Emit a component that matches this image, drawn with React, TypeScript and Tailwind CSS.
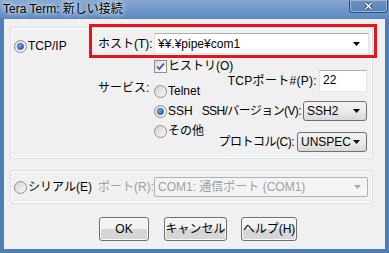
import React from "react";

const font = "font-['Liberation_Sans','Noto_Sans_CJK_JP',sans-serif]";

function Arrow({ gray }: { gray?: boolean }) {
  return (
    <svg width="7" height="4" viewBox="0 0 7 4" className="shrink-0">
      <path d="M0 0h7L3.5 4z" fill={gray ? "#a8a8a8" : "#000"} />
    </svg>
  );
}

function Radio({ on }: { on?: boolean }) {
  return (
    <span className="flex h-[13px] w-[13px] shrink-0 items-center justify-center rounded-full border border-[#8f8f8f] bg-gradient-to-br from-[#d6d6d6] to-[#fdfdfd]">
      {on ? (
        <span className="h-[7px] w-[7px] rounded-full border border-[#1c4f8c] bg-gradient-to-br from-[#8ec3f0] to-[#1a5aa8]" />
      ) : (
        <span className="h-[9px] w-[9px] rounded-full bg-gradient-to-br from-[#d4d4d4] to-[#f6f6f6]" />
      )}
    </span>
  );
}

function Check() {
  return (
    <span className="flex h-[13px] w-[13px] shrink-0 items-center justify-center border border-[#8f8f8f] bg-gradient-to-br from-[#dcdcdc] to-[#fdfdfd]">
      <svg width="9" height="9" viewBox="0 0 9 9">
        <path d="M1 4.5l2.3 2.5L8 1.5" fill="none" stroke="#3b4fa0" strokeWidth="1.8" />
      </svg>
    </span>
  );
}

function Select({ w, text }: { w: string; text: string }) {
  return (
    <div
      className={`${w} flex h-[20px] items-center justify-between rounded-[3px] border border-[#707070] bg-gradient-to-b from-[#f2f2f2] via-[#ebebeb] to-[#d8d8d8] pl-[3px] pr-[6px]`}
    >
      <span>{text}</span>
      <Arrow />
    </div>
  );
}

function Btn({ w, children }: { w: string; children: React.ReactNode }) {
  return (
    <button
      className={`${w} flex h-[24px] items-center justify-center rounded-[3px] border border-[#707070] bg-gradient-to-b from-[#f3f3f3] from-50% to-[#d6d6d6] to-50% shadow-[inset_0_0_0_1px_#fbfbfb]`}
    >
      {children}
    </button>
  );
}

export default function App() {
  return (
    <div
      className={`${font} flex h-[253px] w-[389px] flex-col overflow-hidden whitespace-nowrap bg-[#4f7db5] text-[12px] leading-[14px] text-black`}
    >
      {/* title bar */}
      <div className="flex h-[19px] bg-gradient-to-b from-[#86a8d2] to-[#5c88bf]">
        <span className="pl-[3px] pt-[2px] [text-shadow:0_0_6px_#fff,0_0_4px_#e8eef6]">
          Tera Term: 新しい接続
        </span>
        <div className="ml-auto mr-[1px] flex h-[13px] w-[39px] items-center justify-center rounded-b-[4px] border border-t-0 border-[#2f4f7a] bg-gradient-to-b from-[#6e93c2] to-[#5a83b8] shadow-[inset_0_0_0_1px_#9ab6d8]">
          <svg width="9" height="8" viewBox="0 0 9 8">
            <path d="M1.5 1l6 6M7.5 1l-6 6" stroke="#24364f" strokeWidth="3" />
            <path d="M1.5 1l6 6M7.5 1l-6 6" stroke="#fff" strokeWidth="1.6" />
          </svg>
        </div>
      </div>

      <div className="flex flex-1 px-[4px] pb-[4px]">
        <div className="relative flex flex-1 flex-col bg-[#f0f0f0] pl-[6px] pt-[8px]">
          {/* TCP/IP group */}
          <div className="flex h-[132px] w-[363px] rounded-[3px] border border-[#d5dfe5] shadow-[inset_0_0_0_1px_#fff]">
            <div className="w-[87px] pl-[3px] pt-[10px]">
              <div className="flex h-[16px] items-center gap-[1px]">
                <Radio on />
                <span>TCP/IP</span>
              </div>
            </div>
            <div className="flex flex-col pt-[5px]">
              <div className="flex h-[21px] items-center">
                <span className="w-[56px]">ホスト(T):</span>
                <div className="flex h-[21px] w-[215px] items-center justify-between border border-[#abadb3] border-x-[#e2e3ea] border-b-[#e3e9ef] bg-white pl-[3px] pr-[8px]">
                  <span>¥¥.¥pipe¥com1</span>
                  <Arrow />
                </div>
              </div>
              <div className="mt-[6px] flex h-[12px] items-center gap-[1px] pl-[56px]">
                <Check />
                <span>ヒストリ(O)</span>
              </div>
              <div className="flex">
                <div className="w-[56px] pt-[8px]">
                  <div className="flex h-[16px] items-center">サービス:</div>
                </div>
                <div className="flex w-[46px] flex-col pt-[9px]">
                  <div className="flex h-[20px] items-center gap-[1px]">
                    <Radio />
                    <span>Telnet</span>
                  </div>
                  <div className="flex h-[20px] items-center gap-[1px]">
                    <Radio on />
                    <span>SSH</span>
                  </div>
                  <div className="flex h-[20px] items-center gap-[1px]">
                    <Radio />
                    <span>その他</span>
                  </div>
                </div>
                <div className="-mt-[2px] flex w-[167px] flex-col items-end">
                  <div className="flex items-center gap-[2px]">
                    <span className="tracking-[0.3px]">TCPポート#(P):</span>
                    <div className="flex h-[22px] w-[48px] items-start border border-[#abadb3] border-x-[#e2e3ea] border-b-[#e3e9ef] bg-white pl-[3px] pt-[2px]">
                      22
                    </div>
                  </div>
                  <div className="mt-[9px] flex items-center gap-[2px]">
                    <span className="tracking-[-0.6px]">SSH/バージョン(V):</span>
                    <Select w="w-[64px]" text="SSH2" />
                  </div>
                  <div className="mt-[11px] flex items-center gap-[3px]">
                    <span className="tracking-[-0.5px]">プロトコル(C):</span>
                    <Select w="w-[70px]" text="UNSPEC" />
                  </div>
                </div>
              </div>
            </div>
          </div>

          {/* serial group */}
          <div className="mt-[11px] flex h-[34px] w-[363px] items-center rounded-[3px] border border-[#d5dfe5] pl-[3px] shadow-[inset_0_0_0_1px_#fff]">
            <div className="flex w-[84px] items-center gap-[1px]">
              <Radio />
              <span>シリアル(E)</span>
            </div>
            <span className="w-[56px] text-[#a0a0a0]">ポート(R):</span>
            <div className="flex h-[20px] w-[214px] items-center justify-between rounded-[2px] border border-[#adb2b5] bg-[#f4f4f4] pl-[3px] pr-[6px] text-[#a0a0a0]">
              <span>COM1: 通信ポート (COM1)</span>
              <Arrow gray />
            </div>
          </div>

          {/* buttons */}
          <div className="mt-[13px] flex gap-[15px] pl-[89px]">
            <Btn w="w-[50px]">OK</Btn>
            <Btn w="w-[63px]">キャンセル</Btn>
            <div className="-ml-px">
              <Btn w="w-[56px]">ヘルプ(H)</Btn>
            </div>
          </div>

          {/* red annotation */}
          <div className="pointer-events-none absolute left-[85px] top-[5px] h-[34px] w-[288px] border-[3px] border-[#e8141c]" />
        </div>
      </div>
    </div>
  );
}
